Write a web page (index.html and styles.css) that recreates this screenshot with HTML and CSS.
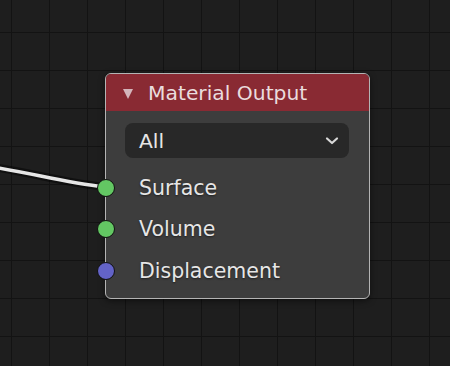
FILE: index.html
```html
<!DOCTYPE html>
<html lang="en">
<head>
    <meta charset="UTF-8">
    <meta name="viewport" content="width=device-width, initial-scale=1.0">
    <title>Material Output</title>
    <link rel="stylesheet" href="styles.css">
</head>
<body>
    <div class="editor">
        <svg class="wire" width="450" height="366" viewBox="0 0 450 366">
            <path class="wire-glow" d="M -20 165 C 30 172, 60 182, 105 187" />
            <path class="wire-line" d="M -20 165 C 30 172, 60 182, 105 187" />
        </svg>

        <div class="node">
            <div class="node-header">
                <span class="collapse-arrow"></span>
                <span class="node-title">Material Output</span>
            </div>
            <div class="node-body">
                <div class="dropdown">
                    <span>All</span>
                    <svg class="chevron" width="14" height="10" viewBox="0 0 14 10">
                        <path d="M 2 2.5 L 7 7 L 12 2.5" />
                    </svg>
                </div>
                <div class="socket-row">
                    <span class="socket shader"></span>
                    <span class="socket-label">Surface</span>
                </div>
                <div class="socket-row">
                    <span class="socket shader"></span>
                    <span class="socket-label">Volume</span>
                </div>
                <div class="socket-row">
                    <span class="socket vector"></span>
                    <span class="socket-label">Displacement</span>
                </div>
            </div>
        </div>
    </div>
</body>
</html>
```

FILE: styles.css
```css
body {
    margin: 0;
    padding: 0;
    font-family: "DejaVu Sans", sans-serif;
    background: #1d1d1d;
    overflow: hidden;
}
.editor {
    position: relative;
    width: 450px;
    height: 366px;
    background-color: #1e1e1e;
    background-image:
        linear-gradient(to right, #131313 1px, transparent 1px),
        linear-gradient(to bottom, #131313 1px, transparent 1px);
    background-size: 38px 38px;
    background-position: 11px 32px;
}
.wire {
    position: absolute;
    left: 0;
    top: 0;
}
.wire path {
    fill: none;
    stroke-linecap: round;
}
.wire-glow {
    stroke: rgba(0, 0, 0, 0.45);
    stroke-width: 8;
}
.wire-line {
    stroke: #e6e6e6;
    stroke-width: 3.5;
}
.node {
    position: absolute;
    left: 105px;
    top: 73px;
    width: 263px;
    height: 224px;
    border: 1px solid #b4b4b4;
    border-radius: 6px;
    background: #3d3d3d;
    box-shadow: 0 2px 6px rgba(0, 0, 0, 0.5);
}
.node-header {
    height: 37px;
    background: #892a33;
    border-radius: 5px 5px 0 0;
    display: flex;
    align-items: center;
    padding-left: 17px;
    color: #eadcde;
}
.collapse-arrow {
    width: 0;
    height: 0;
    border-left: 5px solid transparent;
    border-right: 5px solid transparent;
    border-top: 10px solid #d4b5bb;
    margin-right: 15px;
    margin-top: 2px;
}
.node-title {
    font-size: 20.3px;
}
.node-body {
    padding: 12px 20px 0 19px;
}
.dropdown {
    height: 35px;
    background: #282828;
    border-radius: 8px;
    display: flex;
    align-items: center;
    justify-content: space-between;
    padding: 0 10px 0 14px;
    color: #e6e6e6;
    font-size: 20.3px;
    margin-bottom: 9px;
}
.chevron path {
    fill: none;
    stroke: #d8d8d8;
    stroke-width: 2.2;
    stroke-linecap: round;
    stroke-linejoin: round;
}
.socket-row {
    position: relative;
    height: 41.5px;
    display: flex;
    align-items: center;
}
.socket {
    position: absolute;
    left: -28px;
    width: 16px;
    height: 16px;
    border-radius: 50%;
    border: 1px solid #111;
}
.socket.shader {
    background: #63c763;
}
.socket.vector {
    background: #6363c7;
}
.socket-label {
    margin-left: 14px;
    color: #e6e6e6;
    font-size: 20.5px;
    text-shadow: 0 1px 2px rgba(0, 0, 0, 0.5);
}
```
